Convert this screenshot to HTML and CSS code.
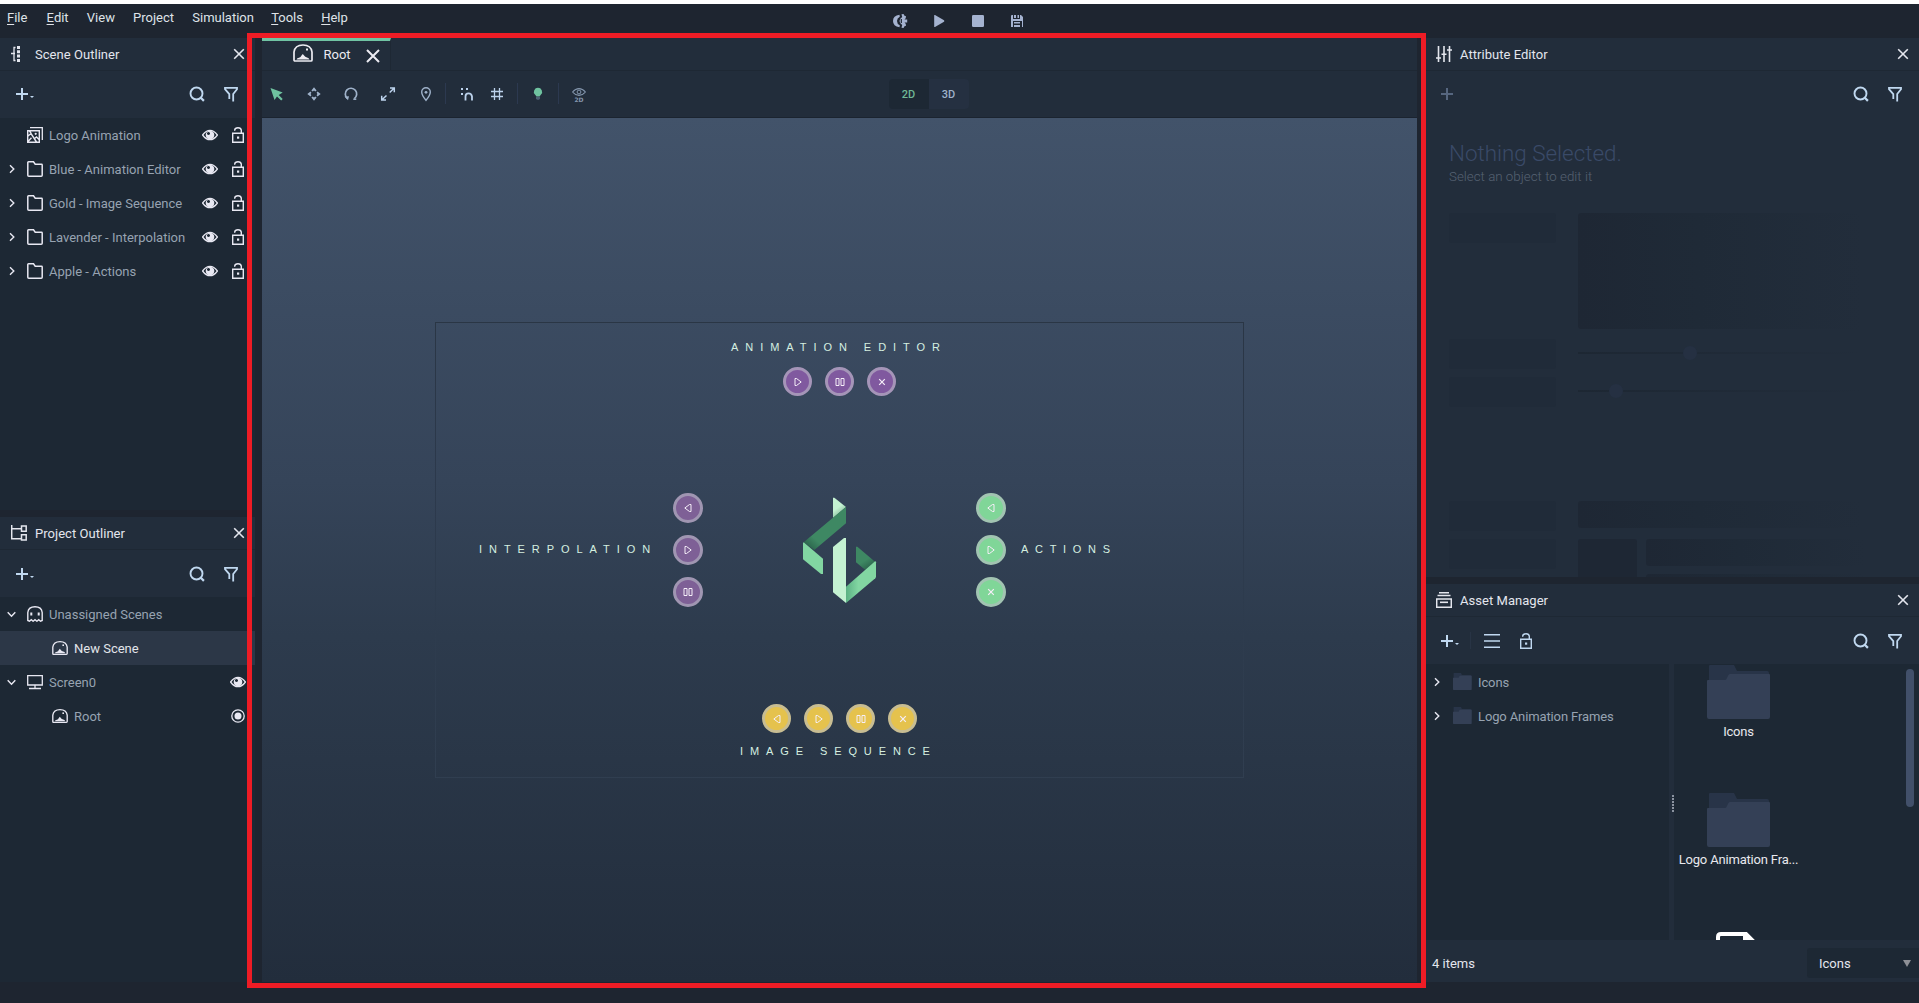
FILE: index.html
```html
<!DOCTYPE html>
<html lang="en">
<head>
<meta charset="utf-8">
<title>Studio</title>
<link rel="stylesheet" href="styles.css">
</head>
<body>
<svg class="defs" width="0" height="0">
  <defs>
    <symbol id="close" viewBox="0 0 16 16"><path d="M3.2 3.2l9.6 9.6M12.8 3.2l-9.6 9.6" fill="none" stroke="currentColor" stroke-width="1.6"/></symbol>
    <symbol id="plus" viewBox="0 0 16 16"><path d="M8 2v12M2 8h12" fill="none" stroke="currentColor" stroke-width="2"/></symbol>
    <symbol id="search" viewBox="0 0 16 16"><circle cx="7.5" cy="7.5" r="6" fill="none" stroke="currentColor" stroke-width="1.9"/><path d="M11.3 11.3l3.6 3.6" stroke="currentColor" stroke-width="2.2"/></symbol>
    <symbol id="filter" viewBox="0 0 16 16"><path d="M6.3 13V8.2L2 3.2V1.9h12v1.3L10.200 8V15.500" fill="none" stroke="currentColor" stroke-width="1.8"/></symbol>
    <symbol id="right" viewBox="0 0 16 16"><path d="M6 4.300L9.800 8 6 11.700" fill="none" stroke="currentColor" stroke-width="1.400"/></symbol>
    <symbol id="down" viewBox="0 0 16 16"><path d="M3.700 6.200L7.500 10.300 11.300 6.200" fill="none" stroke="currentColor" stroke-width="1.400"/></symbol>
    <symbol id="folder" viewBox="0 0 16 16"><path d="M.8 14.200V1.500q0-.7.700-.7H6.500l1.700 2.400h6.300q.7 0 .7.700v10.300q0 1-1 1H1.800q-1 0-1-1z" fill="none" stroke="currentColor" stroke-width="1.500"/></symbol>
    <symbol id="images" viewBox="0 0 16 16"><path d="M3 .7h12.300v12.300" fill="none" stroke="currentColor" stroke-width="1.300"/><path d="M.7 3.700h11.600v11.600H.7zM1 9l3-2.500 5.500 8.500M1 14.500l3.500-3.700M7 12l2.500-2 2.500 2.500M2 3.500l2 2.500" fill="none" stroke="currentColor" stroke-width="1.400"/><circle cx="8.700" cy="6.800" r="1.100" fill="currentColor"/></symbol>
    <symbol id="eye" viewBox="0 0 16 16"><path d="M.6 8Q4 3.300 8 3.300T15.400 8Q12 12.700 8 12.700T.6 8z" fill="none" stroke="currentColor" stroke-width="1.300"/><path d="M8 3.700a4.300 4.300 0 1 0 .01 0zM6.500 5a1.500 1.500 0 1 1-.01 0z" fill="currentColor" fill-rule="evenodd"/></symbol>
    <symbol id="lock" viewBox="0 0 16 16"><path d="M2.700 6.200h10.600v9H2.700zM4.700 3.800V3Q5 .8 8 .8t3.300 2.400v3" fill="none" stroke="currentColor" stroke-width="1.400"/><rect x="7" y="9.500" width="2.200" height="2.200" fill="currentColor"/></symbol>
    <symbol id="outline" viewBox="0 0 16 16"><path d="M4.500 1.500H3v13h1.500M0 7.500h4" fill="none" stroke="currentColor" stroke-width="1.300"/><path d="M6 0h3v3H6zM6 4.300h3v3H6zM6 8.600h3v3H6zM6 13h3v3H6z" fill="currentColor"/></symbol>
    <symbol id="tree" viewBox="0 0 16 16"><path d="M.7 0v13.700h9.500M.7 3.700h9.500M10.500 1h4.700v5.300h-4.700zM10.500 9.700h4.700V15h-4.700z" fill="none" stroke="currentColor" stroke-width="1.500"/></symbol>
    <symbol id="ghost" viewBox="0 0 16 16"><path d="M.8 14.500V6.500Q1.500.8 8 .8t7.200 5.700v8l-1.700.7-1.800-1.500-1.800 1.500L8 13.700l-1.900 1.500-1.800-1.500-1.800 1.500z" fill="none" stroke="currentColor" stroke-width="1.400"/><path d="M3.300 6.500h2v3h-2zM10.700 6.500h2v3h-2z" fill="currentColor"/></symbol>
    <symbol id="scene" viewBox="0 0 20 18"><path d="M1 16V8Q2 1 10 1t9 7v8q0 1-1 1H2q-1 0-1-1z" fill="none" stroke="currentColor" stroke-width="1.700"/><path d="M3.500 15.500q.5-1.500 2.500-1.700l1.500-.8 1-1.500 1.300-1.500 1.500 1.700 1 1 1.700.7q2 .5 2.500 2.100z" fill="currentColor"/><rect x="13" y="4.500" width="2" height="2" fill="currentColor"/></symbol>
    <symbol id="screen" viewBox="0 0 16 16"><path d="M.7 1.700h14.600v9.300H.7zM8 11v3.500M2 14.500h12" fill="none" stroke="currentColor" stroke-width="1.300"/></symbol>
    <symbol id="radio" viewBox="0 0 16 16"><circle cx="8" cy="8" r="6.200" fill="none" stroke="currentColor" stroke-width="1.300"/><circle cx="8" cy="8" r="3.500" fill="currentColor"/></symbol>
    <symbol id="sliders" viewBox="0 0 16 16"><path d="M2.500 0v16M8 0v16M13.500 0v16" stroke="currentColor" stroke-width="1.600"/><path d="M0 12h5M5.500 8.200h5M11 4h5" stroke="currentColor" stroke-width="1.600"/></symbol>
    <symbol id="drawer" viewBox="0 0 16 16"><path d="M3 .7h10M1.500 3.500h13" stroke="currentColor" stroke-width="1.400"/><path d="M.7 7h14.600v8.300H.7z" fill="none" stroke="currentColor" stroke-width="1.500"/><path d="M4 10.300h8" stroke="currentColor" stroke-width="1.600"/></symbol>
    <symbol id="rows" viewBox="0 0 16 16"><path d="M0 1.800h16M0 8h16M0 14.200h16" stroke="currentColor" stroke-width="1.500"/></symbol>
    <symbol id="rewind" viewBox="0 0 16 16"><path d="M7.500 1.800Q1 2.500 1 8t6.500 6.200l.3-2Q5 11 5 8t2.800-4.200z" fill="currentColor"/><path d="M9.500 1.300l2-.3 1 1.800 1.500.4-.3 2-1.200 1.300h2.700v3h-2.700l1.200 1.300.3 2-1.500.4-1 1.800-2-.3.700-2.700Q7.700 10.700 7.500 8q.2-2.700 2.700-4z" fill="currentColor"/><path d="M9.300 6v4" stroke="#1e2530" stroke-width="1.200"/></symbol>
    <symbol id="play" viewBox="0 0 16 16"><path d="M3.200 2.500q0-.8.800-.5l9 5.300q.7.700 0 1.400l-9 5.300q-.8.300-.8-.5z" fill="currentColor"/></symbol>
    <symbol id="stop" viewBox="0 0 16 16"><rect x="2" y="2" width="12" height="12" rx="1.300" fill="currentColor"/></symbol>
    <symbol id="save" viewBox="0 0 16 16"><path d="M2 3q0-1 1-1h1v4h7V2h1l2 2v10h-1V8H4v6H2zM5 2h2v3H5zM8.500 2H10v3H8.500zM5 9h6v1.500H5zM5 12h6v2H5z" fill="currentColor"/></symbol>
    <symbol id="cursor" viewBox="0 0 16 16"><path d="M1.500 2l12.200 4.500-4 2.500 4 4-1.500 1.500-4.200-4-2.500 3.500z" fill="currentColor"/></symbol>
    <symbol id="move" viewBox="0 0 16 16"><path d="M8 1.300l2.600 3.200-1.300.9L8 4.600l-1.300.8-1.300-.9zM8 14.700l2.600-3.200-1.300-.9-1.300.8-1.300-.8-1.300.9zM1.300 8l3.200-2.600.9 1.300L4.600 8l.8 1.300-.9 1.300zM14.700 8l-3.200-2.600-.9 1.300.8 1.300-.8 1.300.9 1.300z" fill="currentColor"/></symbol>
    <symbol id="rotate" viewBox="0 0 16 16"><path d="M4.300 12.300A5.700 5.700 0 1 1 11.300 12.600" fill="none" stroke="currentColor" stroke-width="1.700"/><path d="M1.500 10.500l4.500-.3-1 4z" fill="currentColor"/><path d="M10.300 13.200h3" stroke="currentColor" stroke-width="1.500"/></symbol>
    <symbol id="scale" viewBox="0 0 16 16"><path d="M10 2h4.300v4.300M14 2.300L9.700 6.500M6 14H1.700V9.700M2 13.700L6.500 9.500" fill="none" stroke="currentColor" stroke-width="1.500"/></symbol>
    <symbol id="pin" viewBox="0 0 16 16"><path d="M8 14.300Q3.700 9.200 3.700 6a4.300 4.300 0 0 1 8.600 0Q12.300 9.200 8 14.300z" fill="none" stroke="currentColor" stroke-width="1.400"/><circle cx="8" cy="6.300" r="1.400" fill="currentColor"/></symbol>
    <symbol id="snap" viewBox="0 0 16 16"><path d="M2 1h2v2H2zM7 1h2v2H7zM2 6h2v2H2z" fill="currentColor"/><path d="M6.500 13.500V9.500Q6.500 6.300 9.500 6.300t3.500 3.200v4" fill="none" stroke="currentColor" stroke-width="1.800"/></symbol>
    <symbol id="grid" viewBox="0 0 16 16"><path d="M5.500 2v12M10.500 2v12M2 5.500h12M2 10.500h12" stroke="currentColor" stroke-width="1.300"/></symbol>
    <symbol id="bulb" viewBox="0 0 16 16"><path d="M8 1.700a4.100 4.100 0 0 1 3 6.900L9.500 10.500h-3L5 8.600a4.100 4.100 0 0 1 3-6.900z" fill="#6fc3a0"/><path d="M6 10.700h4v2L9 13.700H7l-1-1z" fill="#4d6074"/></symbol>
    <symbol id="g-play" viewBox="0 0 12 12"><path d="M3 2.500h1.500L9.200 6 4.500 9.500H3z" fill="none" stroke="currentColor"/></symbol>
    <symbol id="g-back" viewBox="0 0 12 12"><path d="M9 2.500H7.500L2.800 6l4.700 3.500H9z" fill="none" stroke="currentColor"/></symbol>
    <symbol id="g-pause" viewBox="0 0 12 12"><path d="M2 2.500h3v7H2zM7 2.500h3v7H7z" fill="none" stroke="currentColor"/></symbol>
    <symbol id="g-x" viewBox="0 0 12 12"><path d="M3.200 3.200l5.600 5.600M8.800 3.200L3.200 8.800" fill="none" stroke="currentColor" stroke-width="1.200"/></symbol>
    <symbol id="bigfolder" viewBox="0 0 64 54"><path d="M2 1q0-1 1-1h24l3 6h30q2 0 2 2v30H2z" fill="#283448"/><path d="M0 16q0-1 1-1h17q1 0 1.500-1l2-4q.5-1 1.500-1h39q1 0 1 1v42q0 2-2 2H2q-2 0-2-2z" fill="#344056"/></symbol>
  </defs>
</svg>

<header class="menubar">
  <nav class="menus">
    <span class="first"><u>F</u>ile</span><span><u>E</u>dit</span><span>View</span><span>Project</span><span class="sim">Simulation</span><span><u>T</u>ools</span><span><u>H</u>elp</span>
  </nav>
  <div class="transport">
    <svg class="i16"><use href="#rewind"/></svg><svg class="i16"><use href="#play"/></svg><svg class="i16"><use href="#stop"/></svg><svg class="i16"><use href="#save"/></svg>
  </div>
</header>

<main class="workspace">
  <aside class="column left">
    <section class="panel scenes">
      <h2 class="head"><svg class="i16"><use href="#outline"/></svg><span>Scene Outliner</span><svg class="i16 end"><use href="#close"/></svg></h2>
      <div class="tools"><svg class="i16 add"><use href="#plus"/></svg><i class="caret"></i><svg class="i16 end"><use href="#search"/></svg><svg class="i16"><use href="#filter"/></svg></div>
      <ul class="list">
        <li><i class="i16"></i><svg class="i16 ic"><use href="#images"/></svg><span>Logo Animation</span><svg class="i16 eye"><use href="#eye"/></svg><svg class="i16 lock"><use href="#lock"/></svg></li>
        <li><svg class="i16"><use href="#right"/></svg><svg class="i16 ic"><use href="#folder"/></svg><span>Blue - Animation Editor</span><svg class="i16 eye"><use href="#eye"/></svg><svg class="i16 lock"><use href="#lock"/></svg></li>
        <li><svg class="i16"><use href="#right"/></svg><svg class="i16 ic"><use href="#folder"/></svg><span>Gold - Image Sequence</span><svg class="i16 eye"><use href="#eye"/></svg><svg class="i16 lock"><use href="#lock"/></svg></li>
        <li><svg class="i16"><use href="#right"/></svg><svg class="i16 ic"><use href="#folder"/></svg><span>Lavender - Interpolation</span><svg class="i16 eye"><use href="#eye"/></svg><svg class="i16 lock"><use href="#lock"/></svg></li>
        <li><svg class="i16"><use href="#right"/></svg><svg class="i16 ic"><use href="#folder"/></svg><span>Apple - Actions</span><svg class="i16 eye"><use href="#eye"/></svg><svg class="i16 lock"><use href="#lock"/></svg></li>
      </ul>
    </section>
    <section class="panel project">
      <h2 class="head"><svg class="i16"><use href="#tree"/></svg><span>Project Outliner</span><svg class="i16 end"><use href="#close"/></svg></h2>
      <div class="tools"><svg class="i16 add"><use href="#plus"/></svg><i class="caret"></i><svg class="i16 end"><use href="#search"/></svg><svg class="i16"><use href="#filter"/></svg></div>
      <ul class="list">
        <li><svg class="i16"><use href="#down"/></svg><svg class="i16 ic"><use href="#ghost"/></svg><span>Unassigned Scenes</span></li>
        <li class="child selected"><svg class="i16 ic"><use href="#scene"/></svg><span>New Scene</span></li>
        <li><svg class="i16"><use href="#down"/></svg><svg class="i16 ic"><use href="#screen"/></svg><span>Screen0</span><svg class="i16 eye"><use href="#eye"/></svg></li>
        <li class="child"><svg class="i16 ic"><use href="#scene"/></svg><span>Root</span><svg class="i16 lock"><use href="#radio"/></svg></li>
      </ul>
    </section>
  </aside>

  <section class="editor">
    <div class="tabs"><div class="tab"><svg width="20" height="18"><use href="#scene"/></svg><span>Root</span><svg class="tabx" width="20" height="20"><use href="#close"/></svg></div></div>
    <div class="editbar">
      <div class="modes">
        <svg class="i16 green"><use href="#cursor"/></svg><svg class="i16"><use href="#move"/></svg><svg class="i16"><use href="#rotate"/></svg><svg class="i16 bright"><use href="#scale"/></svg><svg class="i16 pin"><use href="#pin"/></svg>
      </div>
      <i class="sep"></i>
      <svg class="i16 snap bright"><use href="#snap"/></svg><svg class="i16 grid bright"><use href="#grid"/></svg>
      <i class="sep"></i>
      <svg class="i16 bulb"><use href="#bulb"/></svg>
      <i class="sep"></i>
      <div class="view2d"><svg width="14" height="8" viewBox="0 0 14 8"><path d="M.6 4Q3.500.6 7 .6T13.400 4Q10.500 7.400 7 7.400T.6 4z" fill="none" stroke="currentColor" stroke-width="1.100"/><circle cx="7" cy="4" r="1.900" fill="none" stroke="currentColor"/></svg><b>2D</b></div>
      <div class="dims"><span class="on">2D</span><span>3D</span></div>
    </div>
    <div class="canvas">
      <svg class="frame" width="811" height="457"><defs><linearGradient id="fr" x1="0" y1="0" x2="0" y2="1"><stop offset="0" stop-color="#2a3645"/><stop offset=".35" stop-color="#2c394c"/><stop offset=".6" stop-color="#2d3b4d"/><stop offset="1" stop-color="#303e50"/></linearGradient></defs><rect x=".5" y=".5" width="808" height="455" fill="none" stroke="url(#fr)"/></svg>
      <span class="label l-anim">ANIMATION EDITOR</span>
      <div class="btns row violet b-anim"><i><svg><use href="#g-play"/></svg></i><i><svg><use href="#g-pause"/></svg></i><i><svg><use href="#g-x"/></svg></i></div>
      <span class="label l-int">INTERPOLATION</span>
      <div class="btns col mauve b-int"><i><svg><use href="#g-back"/></svg></i><i><svg><use href="#g-play"/></svg></i><i><svg><use href="#g-pause"/></svg></i></div>
      <svg class="logo" width="100" height="130" viewBox="0 0 300 390">
        <defs>
          <linearGradient id="s1" gradientUnits="userSpaceOnUse" x1="138" y1="72" x2="147" y2="84"><stop offset="0" stop-color="#c4f2d2"/><stop offset="1" stop-color="#9fd0b0"/></linearGradient>
          <linearGradient id="s2" gradientUnits="userSpaceOnUse" x1="55" y1="185" x2="76" y2="162"><stop offset="0" stop-color="#2c664d"/><stop offset="1" stop-color="#3e8863"/></linearGradient>
          <linearGradient id="s3" gradientUnits="userSpaceOnUse" x1="168" y1="0" x2="205" y2="0"><stop offset="0" stop-color="#5bb184"/><stop offset="1" stop-color="#82d6a2"/></linearGradient>
          <linearGradient id="s4" gradientUnits="userSpaceOnUse" x1="242" y1="246" x2="228" y2="224"><stop offset="0" stop-color="#2c664d"/><stop offset="1" stop-color="#3e8863"/></linearGradient>
        </defs>
        <path d="M129 38h4l35 28-39 33z" fill="url(#s1)"/>
        <path d="M165 68l3-3v50l-95 80-32-23z" fill="url(#s2)"/>
        <path d="M39 174l2-2 58 49v46h-6l-54-44z" fill="#82d6a2"/>
        <path d="M129 186l33-27h6v195l-39-32z" fill="#c4f2d2"/>
        <path d="M198 185h4l53 45-30 24-27-22z" fill="url(#s4)"/>
        <path d="M256 228l2 4v44l-2 4-88 74v-49z" fill="url(#s3)"/>
      </svg>
      <div class="btns col apple b-act"><i><svg><use href="#g-back"/></svg></i><i><svg><use href="#g-play"/></svg></i><i><svg><use href="#g-x"/></svg></i></div>
      <span class="label l-act">ACTIONS</span>
      <div class="btns row gold b-seq"><i><svg><use href="#g-back"/></svg></i><i><svg><use href="#g-play"/></svg></i><i><svg><use href="#g-pause"/></svg></i><i><svg><use href="#g-x"/></svg></i></div>
      <span class="label l-seq">IMAGE SEQUENCE</span>
    </div>
  </section>

  <aside class="column right">
    <section class="panel attributes">
      <h2 class="head"><svg class="i16"><use href="#sliders"/></svg><span>Attribute Editor</span><svg class="i16 end"><use href="#close"/></svg></h2>
      <div class="tools"><svg class="i16 add dim"><use href="#plus"/></svg><svg class="i16 end"><use href="#search"/></svg><svg class="i16"><use href="#filter"/></svg></div>
      <div class="empty">
        <h3>Nothing Selected.</h3>
        <p>Select an object to edit it</p>
        <div class="ghosts">
          <i class="gl"></i><i class="gr tall"></i>
          <i class="gl"></i><i class="slide"><b style="left:105px"></b></i>
          <i class="gl"></i><i class="slide"><b style="left:31px"></b></i>
          <i class="gl"></i><i class="gr"></i>
          <i class="gl"></i><div class="split"><i class="thumb"></i><div class="lines"><i class="gr"></i><i class="gr"></i></div></div>
        </div>
      </div>
    </section>
    <section class="panel assets">
      <h2 class="head"><svg class="i16"><use href="#drawer"/></svg><span>Asset Manager</span><svg class="i16 end"><use href="#close"/></svg></h2>
      <div class="tools"><svg class="i16 add"><use href="#plus"/></svg><i class="caret"></i><i class="sep"></i><svg class="i16 rows"><use href="#rows"/></svg><svg class="i16"><use href="#lock"/></svg><svg class="i16 end"><use href="#search"/></svg><svg class="i16"><use href="#filter"/></svg></div>
      <div class="browser">
        <ul class="tree">
          <li><svg class="i16"><use href="#right"/></svg><svg class="fold" width="19" height="17" viewBox="0 0 64 54" preserveAspectRatio="none"><use href="#bigfolder" width="64" height="54"/></svg><span>Icons</span></li>
          <li><svg class="i16"><use href="#right"/></svg><svg class="fold" width="19" height="17" viewBox="0 0 64 54" preserveAspectRatio="none"><use href="#bigfolder" width="64" height="54"/></svg><span>Logo Animation Frames</span></li>
        </ul>
        <div class="split-handle"><i></i></div>
        <div class="thumbs">
          <figure><svg width="64" height="54"><use href="#bigfolder"/></svg><figcaption>Icons</figcaption></figure>
          <figure><svg width="64" height="54"><use href="#bigfolder"/></svg><figcaption>Logo Animation Fra...</figcaption></figure>
          <figure class="doc"><svg width="42" height="50" viewBox="0 0 42 50"><path d="M2 48V5q0-3 3-3h25l10 10v36z" fill="none" stroke="#fff" stroke-width="4"/><path d="M27 1h4l11 11H27z" fill="#fff"/></svg></figure>
          <i class="scroll"></i>
        </div>
      </div>
      <footer class="foot"><span>4 items</span><div class="select"><span>Icons</span><i></i></div></footer>
    </section>
  </aside>
</main>
<div class="highlight"></div>
</body>
</html>
```

FILE: styles.css
```css
* { box-sizing: border-box; }
body {
  margin: 0;
  width: 1919px;
  height: 1003px;
  overflow: hidden;
  position: relative;
  display: grid;
  grid-template-rows: 34px 944px;
  border-top: 4px solid #fff;
  background: #1e2530;
  color: #e4e6ee;
  font: 13px/16px Roboto, sans-serif;
}
svg { display: block; }
ul, h2, h3, p, figure { margin: 0; padding: 0; list-style: none; font-weight: 400; }
.defs { position: absolute; }
.i16 { width: 16px; height: 16px; flex: none; }
.end { margin-left: auto; }

/* menu bar */
.menubar { display: flex; background: #1e2530; }
.menus { display: flex; gap: 18.200px; width: 892px; padding: 6px 0 0 7px; color: #dfe3e8; }
.menus .first { margin-right: 1px; }
.menus .sim { margin-right: -1px; }
.menus u { text-underline-offset: 2px; text-decoration-thickness: 1px; }
.transport { display: flex; gap: 23px; padding-top: 9px; color: #a5b3d0; }

.workspace { display: grid; grid-template-columns: 255px 1155px 495px; gap: 7px; }
.column { display: grid; gap: 7px; min-width: 0; }
.left { grid-template-rows: 472px 465px; }
.right { grid-template-rows: 539px 398px; }
.panel { background: #1d2834; min-width: 0; overflow: hidden; }

.head { display: flex; align-items: center; height: 33px; padding: 0 8px 1px 11px; background: #222d3b; border-bottom: 1px solid #1e2834; font-size: 13px; letter-spacing: .04px; }
.head > svg:first-child { margin-right: 8px; }
.head span, .list span, .tree span, .foot span { padding-top: 2px; }
.right .head { padding-left: 12px; }
.tools { display: flex; align-items: center; height: 47px; padding: 0 16px 1px 14px; background: #222d3b; color: #c0d8f0; }
.project .tools, .assets .tools { padding-bottom: 0; }
.tools .end { margin-right: 18px; }
.right .tools { padding-left: 15px; }
.caret { margin: 6px 0 0 0; border: 2px solid transparent; border-top-color: currentColor; border-bottom: 0; }
.dim { color: #56667f; }

/* outliner rows */
.list li { display: flex; align-items: center; height: 34px; padding: 0 9px 0 4px; color: #97a3b1; }
.list .i16 { color: #e8e8f2; }
.list .ic { margin: 0 6px 0 7px; }
.list .child { padding-left: 45px; }
.list .selected { background: #2c3747; color: #e2e5ea; }
.list .eye { margin-left: auto; }
.list .lock { margin-left: auto; }
.list .eye + .lock { margin-left: 12px; }

/* editor */
.editor { display: grid; grid-template-rows: 33px 47px 864px; background: #222d3b; }
.tabs { border-bottom: 1px solid #1e2834; }
.tab { display: flex; align-items: flex-start; width: 129px; height: 32px; padding: 3px 0 0 31px; border-top: 3px solid #70c3a3; border-right: 1px solid #1e2834; color: #ecebf2; }
.tab span { margin: 3px 0 0 10.500px; }
.tabx { margin: 2px 0 0 12px; }
.editbar { display: flex; align-items: center; border-bottom: 1px solid #1b2430; padding: 0 0 1px 7px; color: #9fb2ca; }
.modes { display: flex; gap: 21px; }
.pin { margin: 0 -1px 0 1px; }
.green { color: #6fc3a0; }
.bright { color: #bcd2ec; }
.sep { width: 1px; height: 21px; background: #2c3950; }
.modes + .sep { margin-left: 12px; }
.snap { margin: 2px 0 0 13px; }
.grid { margin: 0 12px 0 14px; }
.bulb { margin: 0 12px 0 12px; }
.view2d { margin: 4px 0 0 13px; width: 14px; color: #8496ad; font: 700 6px/6px "DejaVu Sans", sans-serif; text-align: center; }
.view2d b { display: block; margin: 1px -2px 0; }
.dims { display: flex; margin-left: 303px; width: 80px; height: 30px; border-radius: 4px; overflow: hidden; background: #253041; font-size: 11px; font-weight: 500; line-height: 31px; text-align: center; }
.dims span { flex: 1; padding-right: 1px; }
.dims .on { background: #1d2834; color: #6fb896; }

/* free canvas */
.canvas { position: relative; overflow: hidden; background: linear-gradient(#42536a 0, #354459 42%, #2d3b4d 60%, #222d3c 100%); }
.canvas > * { position: absolute; }
.frame { left: 173px; top: 204px; }
.label { font: 11px/13px "Liberation Sans", Arial, sans-serif; letter-spacing: 6.950px; white-space: nowrap; color: #d5efe0; }
.l-anim { left: 469px; top: 223px; }
.l-int { left: 217px; top: 425px; }
.l-act { left: 759px; top: 425px; letter-spacing: 6.700px; }
.l-seq { left: 478px; top: 627px; letter-spacing: 6.900px; }
.btns { display: flex; color: #fff; }
.btns i { display: grid; place-items: center; border-radius: 50%; }
.btns svg { width: 12px; height: 12px; }
.row { gap: 13px; }
.row i { width: 29px; height: 29px; border: 3px solid; }
.col { flex-direction: column; gap: 12px; }
.col i { width: 30px; height: 30px; border: 3px solid; }
.violet i { background: #80599f; border-color: #a595b8; }
.mauve i { background: #7e6096; border-color: #a096b2; }
.apple i { background: #80d698; border-color: #a2c4b2; }
.gold i { background: #e5c24d; border-color: #c8bd92; }
.btns i svg { color: #f5eef8; }
.b-anim { left: 521px; top: 249px; }
.b-int { left: 411px; top: 375px; }
.b-act { left: 714px; top: 375px; }
.b-seq { left: 500px; top: 586px; }
.logo { left: 528px; top: 367px; }

/* attribute editor */
.attributes { background: #222d3b; }
.empty { padding: 22px 0 0 25px; }
.empty h3 { font-size: 22.400px; font-weight: 300; line-height: 27px; color: #3a4a68; }
.empty p { margin-top: 2px; font-size: 13.350px; line-height: 16px; color: #566272; font-weight: 300; }
.ghosts { display: grid; grid-template-columns: 107px 300px; column-gap: 22px; margin-top: 28px; grid-template-rows: 126px 38px 124px 38px 40px; }
.gl { height: 30px; border-radius: 3px; background: #202b39; }
.gr { height: 27px; border-radius: 3px 0 0 3px; background: linear-gradient(90deg, #1e2734, #1f2a37 40%, #222d3b 95%); }
.tall { height: 116px; }
.slide { height: 2px; margin-top: 13px; background: linear-gradient(90deg, #1d2733, #222d3b 95%); }
.slide b { position: relative; display: block; top: -6px; width: 14px; height: 14px; border-radius: 50%; background: #253042; }
.split { display: flex; gap: 9px; }
.thumb { width: 59px; height: 60px; border-radius: 3px; background: #1e2734; }
.lines { flex: 1; display: grid; gap: 8px; align-content: start; }

/* asset manager */
.assets { display: grid; grid-template-rows: 33px 47px 276px 42px; background: #222d3b; }
.assets .sep { height: 17px; margin-left: 11px; background: #283445; }
.assets .rows { margin: 0 18px 0 13px; }
.browser { display: grid; grid-template-columns: 245px 5px 245px; min-height: 0; }
.tree, .thumbs { background: #1d2834; overflow: hidden; }
.tree li { display: flex; align-items: center; height: 34px; padding: 1px 0 0 5px; color: #97a3b1; letter-spacing: -.12px; }
.tree .i16 { color: #e8e8f2; }
.fold { margin: 0 6px 0 8px; }
.split-handle { display: grid; place-items: center end; }
.split-handle i { width: 2px; height: 17px; margin-top: 2px; background: repeating-linear-gradient(#8b93a0 0 2px, transparent 2px 3px); }
.thumbs { position: relative; padding: 1px 116px 0 0; }
.thumbs figure { display: flex; flex-direction: column; align-items: center; height: 128px; }
.thumbs figcaption { margin-top: 5px; white-space: nowrap; color: #e8e8ee; letter-spacing: -.18px; }
.thumbs .doc { padding: 11px 3px 0 0; }
.thumbs svg { flex: none; }
.scroll { position: absolute; left: 232px; top: 5px; width: 8px; height: 138px; border-radius: 4px; background: #42506a; }
.foot { display: flex; align-items: center; justify-content: space-between; padding: 4px 0 0 8px; }
.select { display: flex; align-items: center; justify-content: space-between; width: 112px; height: 30px; padding: 0 8px 0 12px; background: #1d2834; border-radius: 3px 0 0 3px; }
.select i { border: 4.500px solid transparent; border-top: 7px solid #8e9096; border-bottom: 0; }

.highlight { position: absolute; left: 247px; top: 29px; width: 1179px; height: 955px; border: 5px solid #ee1c25; }
```
